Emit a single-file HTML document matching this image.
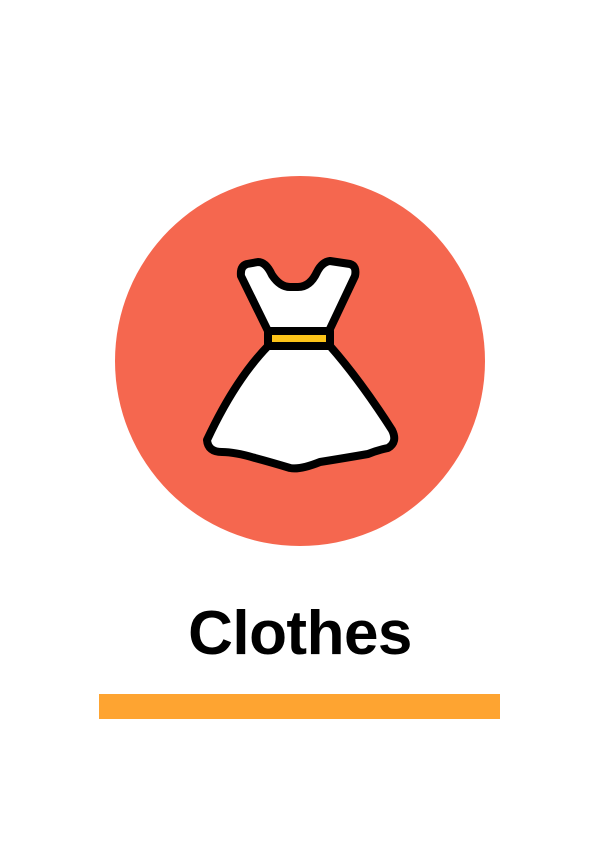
<!DOCTYPE html>
<html><head><style>
html,body{margin:0;padding:0;background:#fff;width:600px;height:848px;overflow:hidden;position:relative}
.c{position:absolute;left:115px;top:176px;width:370px;height:370px;border-radius:50%;background:#f5674f}
.t{position:absolute;left:0;width:600px;top:598px;text-align:center;font:bold 62px "Liberation Sans",sans-serif;color:#000;letter-spacing:-0.5px}
.b{position:absolute;left:99px;top:694px;width:401px;height:25px;background:#fea431}
</style></head><body>
<div class="c"></div>
<svg style="position:absolute;left:0;top:0" width="600" height="848">
<g stroke="#000" stroke-width="8" stroke-linejoin="round" fill="#fff">
<path d="M247 264 Q240 266 241 276 L268 331 L329 331 L355 276 Q357 266 350 264 L330 261 Q322 262 317 272 Q310 287 298 287 L290 287 Q280 287 272 275 Q266 262 258 262 Z"/>
<path d="M268 346 L330 346 Q360 380 392 430 Q398 442 388 448 Q378 450 368 454 Q345 458 320 462 Q300 470 290 468 Q270 462 255 458 Q235 452 222 452 Q208 452 207 440 Q235 380 268 346 Z"/>
<rect x="268" y="331" width="62" height="15" fill="#fcc419"/>
</g>
</svg>
<div class="t">Clothes</div>
<div class="b"></div>
</body></html>
